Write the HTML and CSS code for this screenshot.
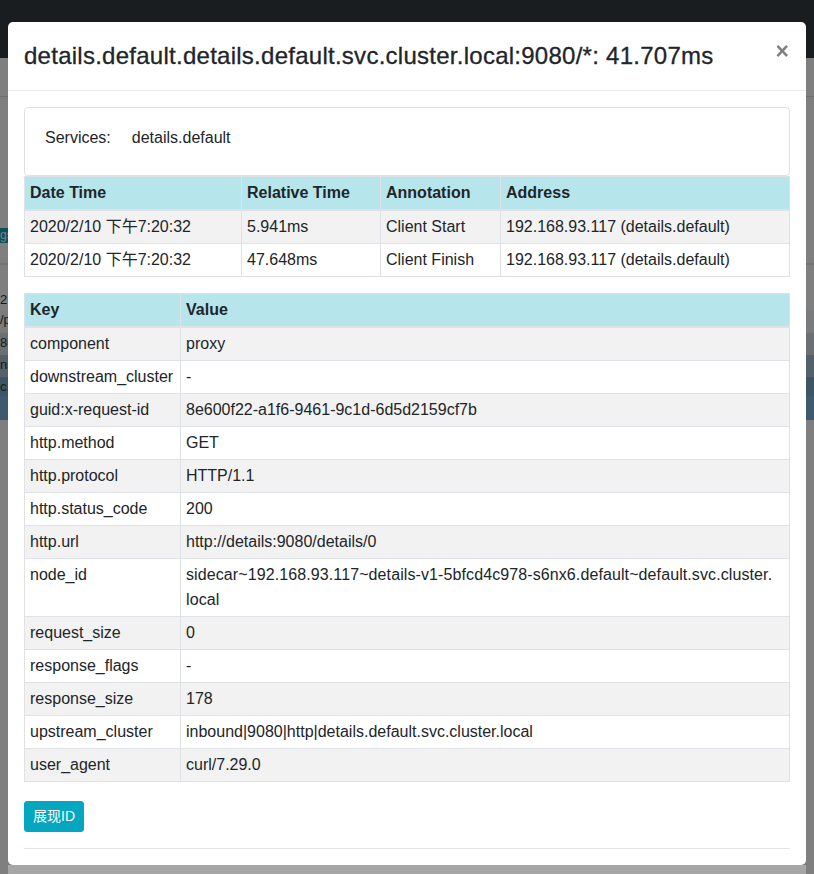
FILE: index.html
```html
<!DOCTYPE html>
<html lang="zh">
<head>
<meta charset="utf-8">
<title>details</title>
<link rel="stylesheet" href="styles.css">
</head>
<body>
<div class="page">
  <div class="navbar"></div>
  <div class="toolbar"></div>
  <div class="panel">
    <div class="panel-gap"></div>
    <div class="badge-row"><span class="badge">gs</span></div>
  </div>
  <div class="list">
    <div class="lrow r0"></div>
    <div class="lrow r1">2:</div>
    <div class="lrow r2">/p</div>
    <div class="lrow r3">80</div>
    <div class="lrow r4">ns</div>
    <div class="lrow r5">c.</div>
    <div class="lrow r6"></div>
  </div>
</div>

<div class="backdrop"></div>

<div class="modal">
  <div class="modal-dialog">
    <div class="modal-content">
      <div class="modal-header">
        <h5 class="modal-title">details.default.details.default.svc.cluster.local:9080/*: 41.707ms</h5>
        <button class="close" type="button">&times;</button>
      </div>
      <div class="modal-body">
        <div class="card">
          <span class="svc-label">Services:</span>
          <span class="svc-value">details.default</span>
        </div>
        <table class="tbl tbl-ann">
          <colgroup>
            <col class="c-date"><col class="c-rel"><col class="c-ann"><col>
          </colgroup>
          <thead>
            <tr><th>Date Time</th><th>Relative Time</th><th>Annotation</th><th>Address</th></tr>
          </thead>
          <tbody>
            <tr><td>2020/2/10 下午7:20:32</td><td>5.941ms</td><td>Client Start</td><td>192.168.93.117 (details.default)</td></tr>
            <tr><td>2020/2/10 下午7:20:32</td><td>47.648ms</td><td>Client Finish</td><td>192.168.93.117 (details.default)</td></tr>
          </tbody>
        </table>
        <table class="tbl tbl-tags">
          <colgroup>
            <col class="c-key"><col>
          </colgroup>
          <thead>
            <tr><th>Key</th><th>Value</th></tr>
          </thead>
          <tbody>
            <tr><td>component</td><td>proxy</td></tr>
            <tr><td>downstream_cluster</td><td>-</td></tr>
            <tr><td>guid:x-request-id</td><td>8e600f22-a1f6-9461-9c1d-6d5d2159cf7b</td></tr>
            <tr><td>http.method</td><td>GET</td></tr>
            <tr><td>http.protocol</td><td>HTTP/1.1</td></tr>
            <tr><td>http.status_code</td><td>200</td></tr>
            <tr><td>http.url</td><td>http://details:9080/details/0</td></tr>
            <tr><td>node_id</td><td class="node"><span class="nowrap">sidecar~192.168.93.117~details-v1-5bfcd4c978-s6nx6.default~default.svc.cluster.</span><br>local</td></tr>
            <tr><td>request_size</td><td>0</td></tr>
            <tr><td>response_flags</td><td>-</td></tr>
            <tr><td>response_size</td><td>178</td></tr>
            <tr><td>upstream_cluster</td><td>inbound|9080|http|details.default.svc.cluster.local</td></tr>
            <tr><td>user_agent</td><td>curl/7.29.0</td></tr>
          </tbody>
        </table>
        <div class="actions">
          <button class="btn-info" type="button">展现ID</button>
        </div>
        <hr class="divider">
      </div>
    </div>
    <div class="dialog-tail"></div>
  </div>
</div>
</body>
</html>
```

FILE: styles.css
```css
html, body {
  margin: 0;
  padding: 0;
  height: 874px;
  overflow: hidden;
}

body {
  font-family: "Liberation Sans", "Noto Sans CJK SC", sans-serif;
  font-size: 16px;
  line-height: 1.5;
  color: #212529;
  background: #fff;
}

/* ---------- background page ---------- */
.page {
  display: flex;
  flex-direction: column;
}

.navbar {
  height: 58px;
  background: #343a40;
}

.toolbar {
  height: 38px;
  background: #fff;
  border-bottom: 1px solid #dcdcdc;
}

.panel {
  height: 166px;
  border-bottom: 2px solid #e4e4e4;
  display: flex;
  flex-direction: column;
}

.panel-gap {
  height: 131px;
}

.badge-row {
  height: 15px;
  display: flex;
}

.badge {
  width: 8px;
  overflow: hidden;
  background: #17a2b8;
  color: #fff;
  font-size: 12px;
  line-height: 15px;
  white-space: nowrap;
}

.list {
  display: flex;
  flex-direction: column;
  font-size: 13px;
  line-height: 20px;
  color: #333;
}

.lrow {
  white-space: nowrap;
  overflow: hidden;
}

.r0 { height: 25px; }
.r1 { height: 20px; }
.r2 { height: 23px; background: #f4f6f8; }
.r3 { height: 22px; background: #d6e0e8; }
.r4 { height: 22px; background: #a8c0d4; }
.r5 { height: 19px; background: #7caacc; }
.r6 { height: 24px; background: #7cb4de; }

/* ---------- backdrop & modal ---------- */
.backdrop {
  position: fixed;
  inset: 0;
  background: rgba(0, 0, 0, 0.5);
}

.modal {
  position: fixed;
  inset: 0;
}

.modal-dialog {
  margin: 22px 8px 0;
}

.modal-content {
  background: #fff;
  border-radius: 5px;
  display: flex;
  flex-direction: column;
}

.dialog-tail {
  height: 9px;
  background: rgba(255, 255, 255, 0.3);
}

.modal-header {
  display: flex;
  align-items: flex-start;
  padding: 16px;
  border-bottom: 1px solid #e9ecef;
}

.modal-title {
  margin: 0;
  font-size: 24px;
  line-height: 36px;
  font-weight: 500;
  letter-spacing: 0.26px;
  -webkit-text-stroke: 0.3px #212529;
}

.close {
  margin: -16px -15px -16px auto;
  padding: 18px 16px 14px;
  background: transparent;
  border: 0;
  font-family: "Liberation Sans", sans-serif;
  font-size: 23px;
  font-weight: 700;
  line-height: 1;
  color: #000;
  opacity: 0.5;
}

.modal-body {
  padding: 16px;
}

.card {
  display: flex;
  gap: 21px;
  padding: 18px 20px 25px;
  border: 1px solid rgba(0, 0, 0, 0.125);
  border-radius: 4px;
}

/* ---------- tables ---------- */
.tbl {
  width: 100%;
  border-collapse: collapse;
  table-layout: fixed;
}

.tbl-ann {
  margin-bottom: 16px;
}

.tbl-tags {
  margin-bottom: 19px;
}

.c-date { width: 217px; }
.c-rel  { width: 139px; }
.c-ann  { width: 120px; }
.c-key  { width: 156px; }

.tbl th,
.tbl td {
  padding: 4px 5px;
  border: 1px solid #dee2e6;
  text-align: left;
  vertical-align: top;
  line-height: 24px;
}

.tbl td.node {
  line-height: 24.5px;
  letter-spacing: 0.1px;
}

.tbl thead th {
  background: #b6e6ec;
  font-weight: 700;
  border-bottom: 2px solid #dee2e6;
}

.tbl tbody tr:nth-child(odd) {
  background: #f2f2f2;
}

.nowrap {
  white-space: nowrap;
}

/* ---------- actions ---------- */
.actions {
  display: flex;
}

.btn-info {
  font-family: "Liberation Sans", "Noto Sans CJK SC", sans-serif;
  font-size: 14px;
  line-height: 21px;
  padding: 4px 8px;
  color: #fff;
  background: #05a6c0;
  border: 1px solid #05a6c0;
  border-radius: 3px;
}

.divider {
  margin: 16px 0 0;
  border: 0;
  border-top: 1px solid rgba(0, 0, 0, 0.1);
}
```
